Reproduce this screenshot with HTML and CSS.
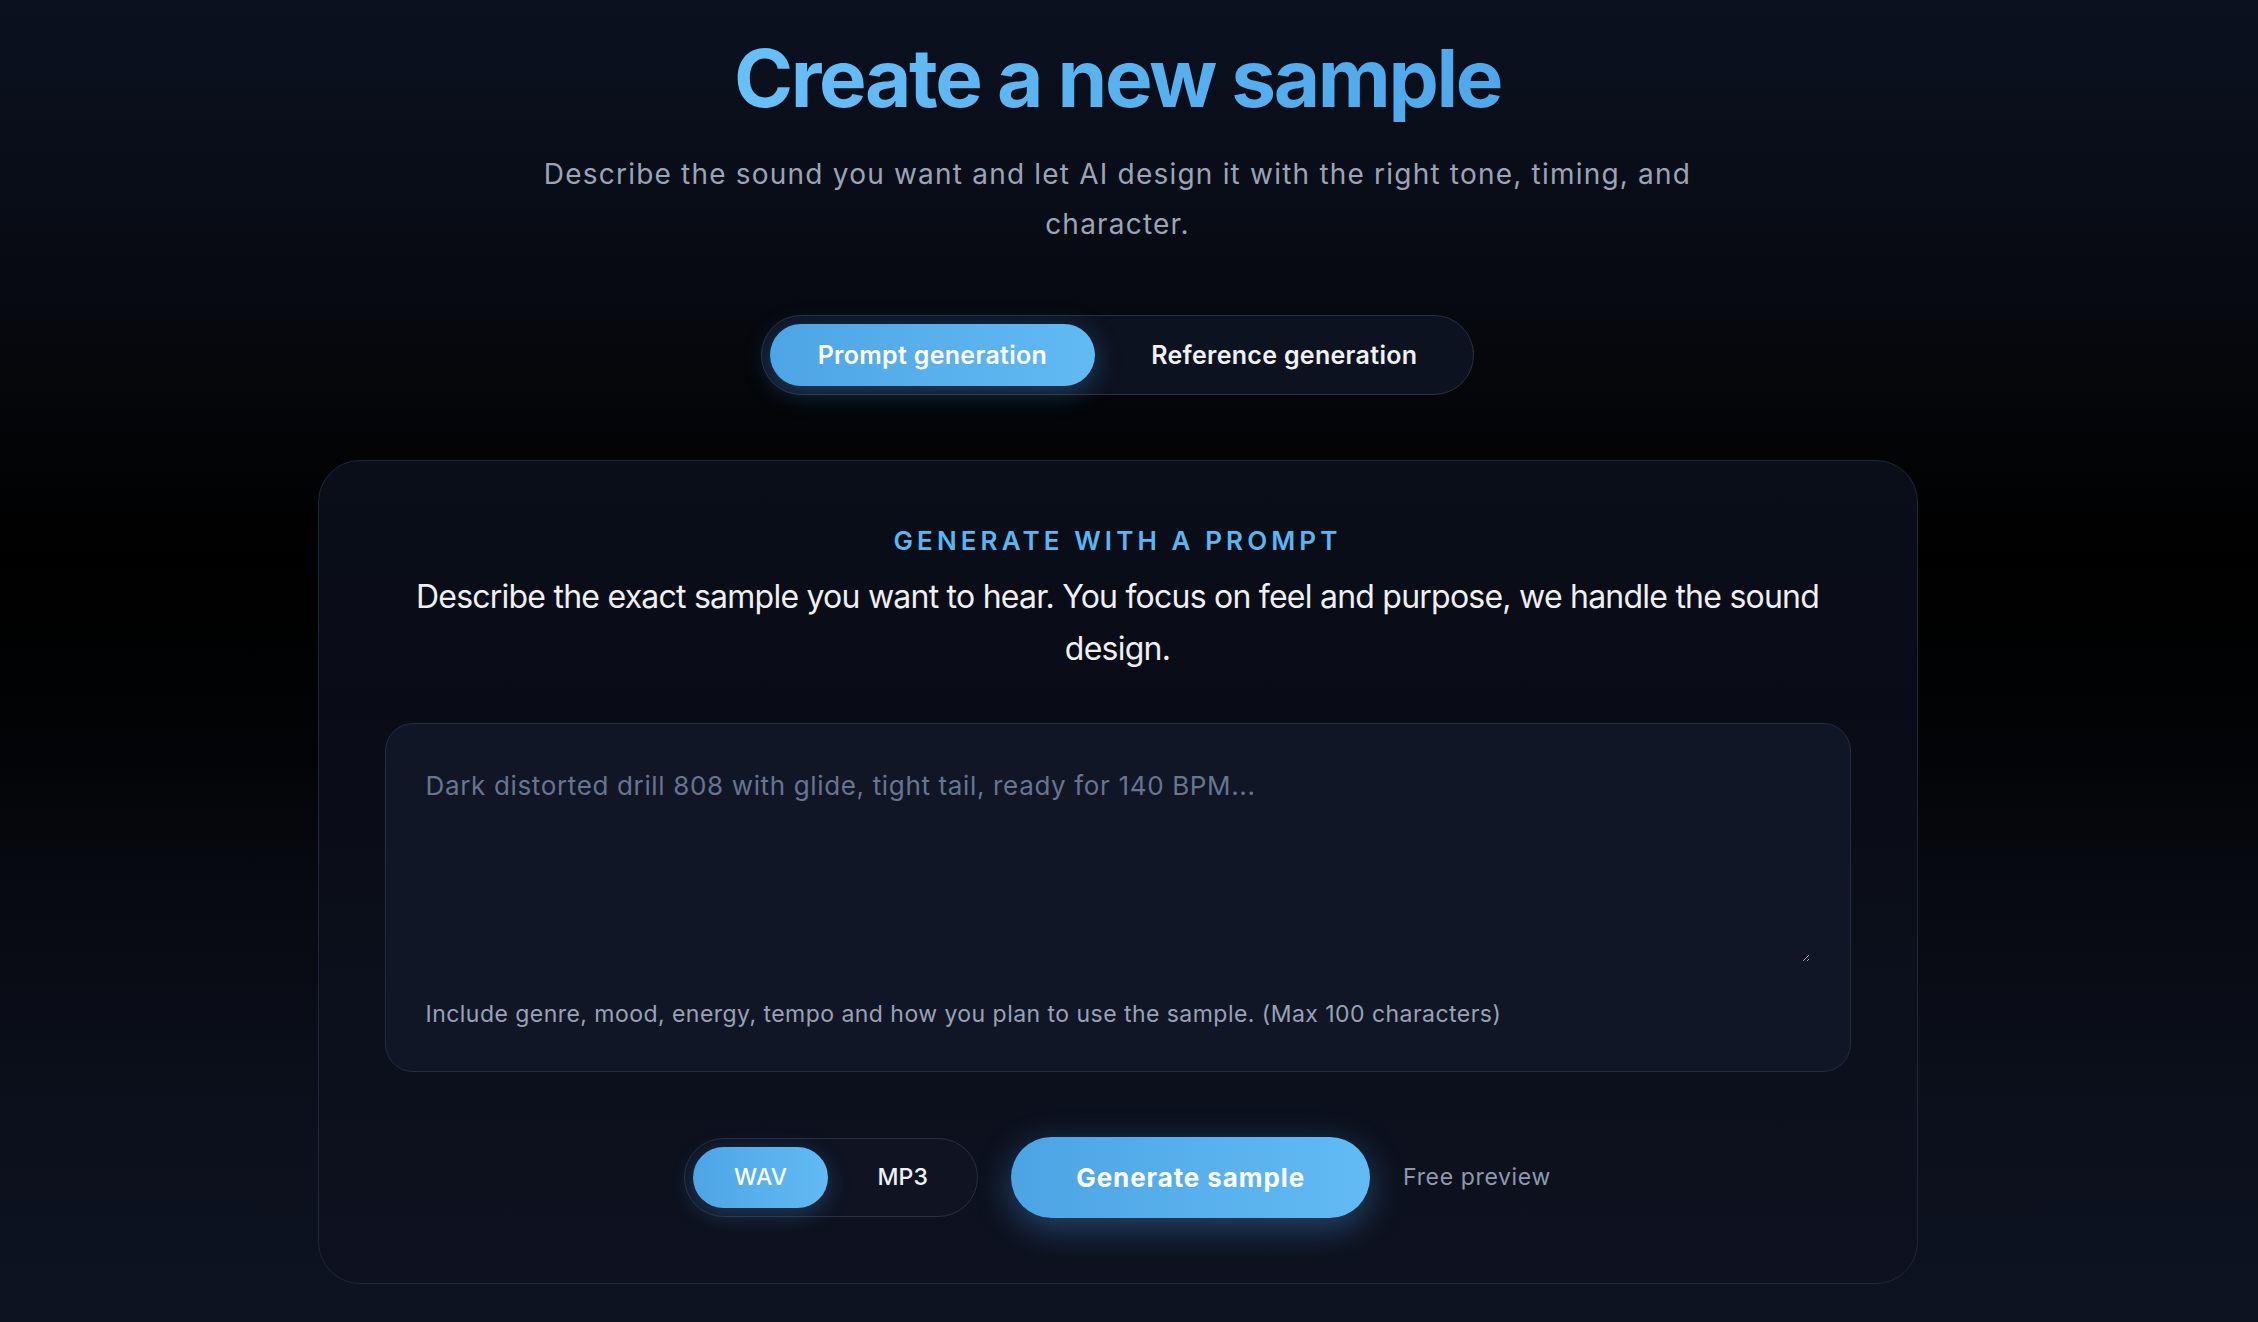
FILE: index.html
```html
<!DOCTYPE html>
<html lang="en">
<head>
<meta charset="utf-8">
<title>Create a new sample</title>
<link rel="stylesheet" href="styles.css">
</head>
<body>
<main class="page">
  <header class="hero">
    <h1 class="hero-title">Create a new sample</h1>
    <p class="hero-sub">Describe the sound you want and let AI design it with the right tone, timing, and character.</p>
  </header>

  <nav class="mode-switch">
    <button class="mode-btn is-active">Prompt generation</button>
    <button class="mode-btn">Reference generation</button>
  </nav>

  <section class="card">
    <div class="card-eyebrow">Generate with a prompt</div>
    <p class="card-lead">Describe the exact sample you want to hear. You focus on feel and purpose, we handle the sound design.</p>

    <div class="prompt-box">
      <textarea class="prompt-input" placeholder="Dark distorted drill 808 with glide, tight tail, ready for 140 BPM..."></textarea>
      <div class="prompt-hint">Include genre, mood, energy, tempo and how you plan to use the sample. (Max 100 characters)</div>
    </div>

    <div class="actions">
      <div class="format-switch">
        <button class="format-btn is-active">WAV</button>
        <button class="format-btn">MP3</button>
      </div>
      <button class="generate-btn">Generate sample</button>
      <span class="free-note">Free preview</span>
    </div>
  </section>
</main>
</body>
</html>
```

FILE: styles.css
```css
* { box-sizing: border-box; }

html, body {
  margin: 0;
  padding: 0;
}

body {
  min-height: 1322px;
  font-family: "Inter", "Noto Sans", "Liberation Sans", sans-serif;
  color: #e6e9f0;
  background: linear-gradient(180deg,
    #0c1120 0%,
    #090d18 14%,
    #040609 30%,
    #000000 42%,
    #020305 55%,
    #070a12 68%,
    #0c101c 85%,
    #0e1322 100%);
}

.page {
  display: flex;
  flex-direction: column;
  align-items: center;
  padding: 34px 23px 0 0;
}

.hero {
  display: flex;
  flex-direction: column;
  align-items: center;
  text-align: center;
}

.hero-title {
  margin: 0;
  font-size: 80px;
  line-height: 88px;
  font-weight: 700;
  letter-spacing: -0.03em;
  background: linear-gradient(90deg, #68c0f8 0%, #58b2ef 50%, #4ea8ea 100%);
  -webkit-background-clip: text;
  background-clip: text;
  color: transparent;
}

.hero-sub {
  margin: 27px 0 0;
  max-width: 1200px;
  font-size: 28px;
  line-height: 50.4px;
  letter-spacing: 0.043em;
  color: #9ba4b6;
}

.mode-switch {
  margin-top: 65px;
  display: flex;
  gap: 8px;
  padding: 8px;
  border: 1px solid #283042;
  border-radius: 999px;
  background: #0d1220;
}

.mode-btn {
  height: 62px;
  padding: 0 48px;
  border: none;
  border-radius: 999px;
  background: transparent;
  font-family: inherit;
  font-size: 25px;
  font-weight: 600;
  letter-spacing: 0.012em;
  color: #eef1f6;
}

.mode-btn.is-active {
  background: linear-gradient(90deg, #4ea5e5 0%, #61baf3 100%);
  color: #ffffff;
  box-shadow: 0 6px 26px rgba(70, 150, 220, 0.35);
}

.card {
  margin-top: 65px;
  width: 1600px;
  padding: 63px 66px 65px;
  border: 1px solid #1f2637;
  border-radius: 42px;
  background: linear-gradient(180deg, #0a0e18 0%, #090c16 30%, #0c101c 70%, #0e1220 100%);
  display: flex;
  flex-direction: column;
  align-items: center;
  text-align: center;
}

.card-eyebrow {
  font-size: 26px;
  line-height: 34px;
  font-weight: 600;
  letter-spacing: 0.158em;
  text-transform: uppercase;
  color: #5ab6f2;
}

.card-lead {
  margin: 13px 0 0;
  font-size: 32px;
  line-height: 52px;
  letter-spacing: -0.024em;
  color: #eef0f4;
}

.prompt-box {
  margin-top: 48px;
  width: 100%;
  padding: 42px 40px 40px 40px;
  border: 1px solid #252d40;
  border-radius: 28px;
  background: #111627;
  display: flex;
  flex-direction: column;
  text-align: left;
}

.prompt-input {
  display: block;
  width: 100%;
  height: 196px;
  padding: 0;
  border: none;
  outline: none;
  background: transparent;
  resize: vertical;
  color-scheme: dark;
  font-family: inherit;
  font-size: 26px;
  line-height: 39px;
  letter-spacing: 0.025em;
  color: #e6e9f0;
}

.prompt-input::placeholder {
  color: #67758e;
}

.prompt-hint {
  margin-top: 35px;
  font-size: 23px;
  line-height: 34px;
  letter-spacing: 0.02em;
  color: #98a2b5;
}

.actions {
  margin-top: 65px;
  display: flex;
  align-items: center;
  gap: 33px;
}

.format-switch {
  display: flex;
  gap: 8px;
  padding: 8px;
  border: 1px solid #283042;
  border-radius: 999px;
  background: #0f1322;
}

.format-btn {
  height: 61px;
  padding: 0 41px;
  border: none;
  border-radius: 999px;
  background: transparent;
  font-family: inherit;
  font-size: 23px;
  font-weight: 500;
  letter-spacing: 0.01em;
  color: #eef1f6;
}

.format-btn.is-active {
  background: linear-gradient(90deg, #4ea5e5 0%, #61baf3 100%);
  color: #ffffff;
  box-shadow: 0 6px 22px rgba(70, 150, 220, 0.3);
}

.generate-btn {
  height: 81px;
  padding: 0 65px;
  border: none;
  border-radius: 999px;
  background: linear-gradient(90deg, #4ca4e4 0%, #62bbf3 100%);
  box-shadow: 0 10px 34px rgba(70, 150, 225, 0.4);
  font-family: inherit;
  font-size: 26px;
  font-weight: 700;
  letter-spacing: 0.035em;
  color: #ffffff;
}

.free-note {
  font-size: 23px;
  letter-spacing: 0.028em;
  color: #8f99ac;
}
```
